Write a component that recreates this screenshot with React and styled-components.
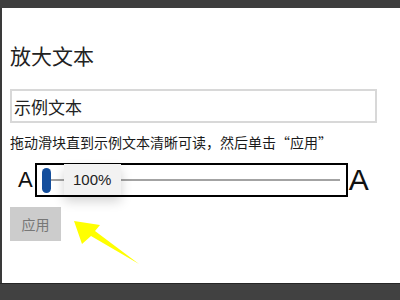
import React from "react";
import styled, { createGlobalStyle } from "styled-components";

const Global = createGlobalStyle`
  html, body { margin: 0; padding: 0; background: #ffffff; }
  body { font-family: "Noto Sans CJK SC", "Liberation Sans", sans-serif; }
`;

const Frame = styled.div`
  width: 400px;
  height: 300px;
  display: flex;
  flex-direction: column;
  overflow: hidden;
`;

const TopBar = styled.div`
  height: 8px;
  flex: none;
  background: #3e3e3e;
`;

const Main = styled.div`
  position: relative;
  flex: 1;
  background: #ffffff;
  border-left: 2px solid #3a3a3a;
  padding: 33px 0 0 8px;
  display: flex;
  flex-direction: column;
  align-items: flex-start;
`;

const BottomBar = styled.div`
  height: 16px;
  flex: none;
  background: #414141;
  border-top: 1px solid #262626;
`;

const Title = styled.h1`
  margin: 0;
  font-family: "Noto Sans CJK SC", sans-serif;
  font-weight: 400;
  font-size: 21px;
  line-height: 29px;
  color: #222;
`;

const SampleBox = styled.div`
  margin-top: 19px;
  box-sizing: border-box;
  width: 367px;
  height: 34px;
  border: 2px solid #d8d8d8;
  padding-left: 2px;
  display: flex;
  align-items: center;
  font-family: "Noto Sans CJK SC", sans-serif;
  font-size: 17px;
  color: #222;
`;

const Hint = styled.p`
  margin: 9px 0 0;
  font-family: "Noto Sans CJK SC", sans-serif;
  font-size: 14px;
  line-height: 20px;
  color: #1a1a1a;
  white-space: nowrap;
`;

const SliderRow = styled.div`
  margin-top: 11px;
  height: 34px;
  display: flex;
  align-items: center;
`;

const Letter = styled.span`
  font-family: "Liberation Sans", Arial, sans-serif;
  font-size: ${(p) => p.$size}px;
  line-height: 1;
  color: #111;
  margin-left: ${(p) => p.$ml}px;
  margin-right: ${(p) => p.$mr}px;
`;

const SliderBox = styled.div`
  position: relative;
  box-sizing: border-box;
  width: 313px;
  height: 34px;
  border: 2px solid #000;
  display: flex;
  align-items: center;
`;

const Thumb = styled.div`
  flex: none;
  width: 9px;
  height: 25px;
  margin-left: 5px;
  border-radius: 5px;
  background: #144e9c;
`;

const Track = styled.div`
  flex: 1;
  height: 2px;
  margin-right: 6px;
  background: #a3a3a3;
`;

const Tip = styled.div`
  position: absolute;
  left: 27px;
  top: -1px;
  width: 57px;
  height: 31px;
  background: #f2f2f2;
  box-shadow: 0 6px 12px rgba(0, 0, 0, 0.18);
  display: flex;
  align-items: center;
  justify-content: center;
  font-family: "Liberation Sans", Arial, sans-serif;
  font-size: 15px;
  color: #222;
`;

const ApplyButton = styled.button`
  margin-top: 10px;
  width: 51px;
  height: 34px;
  border: none;
  padding: 0;
  background: #cccccc;
  color: #777;
  font-family: "Noto Sans CJK SC", sans-serif;
  font-size: 14px;
`;

const Arrow = styled.svg`
  position: absolute;
  left: 0;
  top: 0;
  pointer-events: none;
`;

export default function App() {
  return (
    <>
      <Global />
      <Frame>
        <TopBar />
        <Main>
          <Title>放大文本</Title>
          <SampleBox>示例文本</SampleBox>
          <Hint>拖动滑块直到示例文本清晰可读，然后单击“应用”</Hint>
          <SliderRow>
            <Letter $size={22} $ml={8} $mr={2}>A</Letter>
            <SliderBox>
              <Thumb />
              <Track />
              <Tip>100%</Tip>
            </SliderBox>
            <Letter $size={30} $ml={1} $mr={0}>A</Letter>
          </SliderRow>
          <ApplyButton>应用</ApplyButton>
          <Arrow width="398" height="275" viewBox="2 8 398 275">
            <polygon
              points="74,221 100,225 95,231 139,264 91,236 82,244"
              fill="#ffff00"
            />
          </Arrow>
        </Main>
        <BottomBar />
      </Frame>
    </>
  );
}
